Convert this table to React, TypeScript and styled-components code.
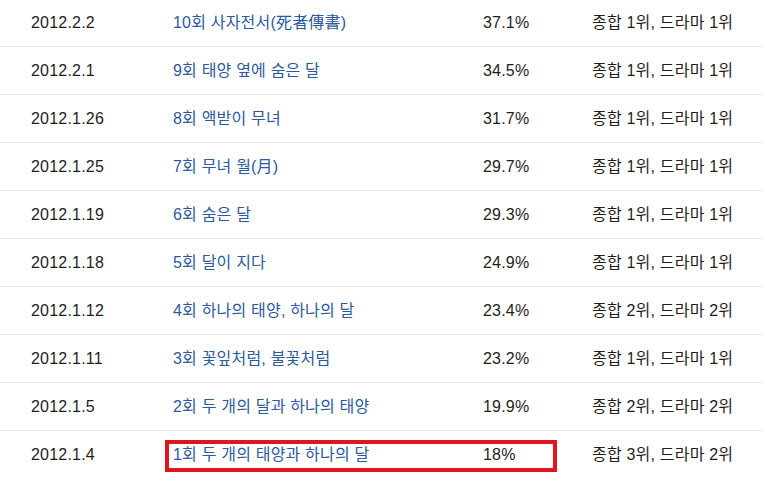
import styled, { createGlobalStyle } from 'styled-components';

const GlobalStyle = createGlobalStyle`
    html, body {
        margin: 0;
        padding: 0;
        background: #ffffff;
    }
    body {
        font-family: "Liberation Sans", Arial, "Noto Sans CJK KR", sans-serif;
    }
`;

type Episode = {
    date: string;
    title: string;
    rating: string;
    rank: string;
    marked?: boolean;
};

const episodes: Episode[] = [
    { date: '2012.2.2', title: '10회 사자전서(死者傳書)', rating: '37.1%', rank: '종합 1위, 드라마 1위' },
    { date: '2012.2.1', title: '9회 태양 옆에 숨은 달', rating: '34.5%', rank: '종합 1위, 드라마 1위' },
    { date: '2012.1.26', title: '8회 액받이 무녀', rating: '31.7%', rank: '종합 1위, 드라마 1위' },
    { date: '2012.1.25', title: '7회 무녀 월(月)', rating: '29.7%', rank: '종합 1위, 드라마 1위' },
    { date: '2012.1.19', title: '6회 숨은 달', rating: '29.3%', rank: '종합 1위, 드라마 1위' },
    { date: '2012.1.18', title: '5회 달이 지다', rating: '24.9%', rank: '종합 1위, 드라마 1위' },
    { date: '2012.1.12', title: '4회 하나의 태양, 하나의 달', rating: '23.4%', rank: '종합 2위, 드라마 2위' },
    { date: '2012.1.11', title: '3회 꽃잎처럼, 불꽃처럼', rating: '23.2%', rank: '종합 1위, 드라마 1위' },
    { date: '2012.1.5', title: '2회 두 개의 달과 하나의 태양', rating: '19.9%', rank: '종합 2위, 드라마 2위' },
    { date: '2012.1.4', title: '1회 두 개의 태양과 하나의 달', rating: '18%', rank: '종합 3위, 드라마 2위', marked: true },
];

const Table = styled.div`
    margin-top: -1px;
    width: 763px;
    font-size: 16px;
    color: #1e1e1e;
`;

const Row = styled.div`
    position: relative;
    display: grid;
    grid-template-columns: 165px 310px 109px 1fr;
    align-items: center;
    height: 47px;
    border-bottom: 1px solid #ebebeb;
    &:last-child {
        border-bottom: none;
    }
`;

const Cell = styled.div<{ $first?: boolean }>`
    padding-left: ${(p) => (p.$first ? '31px' : '8px')};
    white-space: nowrap;
    line-height: 20px;
    padding-top: 1px;
    letter-spacing: 0.2px;
`;

const TitleLink = styled.a`
    color: #2c5a9c;
    text-decoration: none;
`;

const Highlight = styled.div`
    position: absolute;
    left: 165px;
    top: 9px;
    width: 392px;
    height: 32px;
    box-sizing: border-box;
    border: 4px solid #e0161f;
    pointer-events: none;
`;

export default function App() {
    return (
        <>
            <GlobalStyle />
            <Table>
                {episodes.map((ep) => (
                    <Row key={ep.date}>
                        <Cell $first>{ep.date}</Cell>
                        <Cell>
                            <TitleLink href='#'>{ep.title}</TitleLink>
                        </Cell>
                        <Cell>{ep.rating}</Cell>
                        <Cell>{ep.rank}</Cell>
                        {ep.marked && <Highlight />}
                    </Row>
                ))}
            </Table>
        </>
    );
}
